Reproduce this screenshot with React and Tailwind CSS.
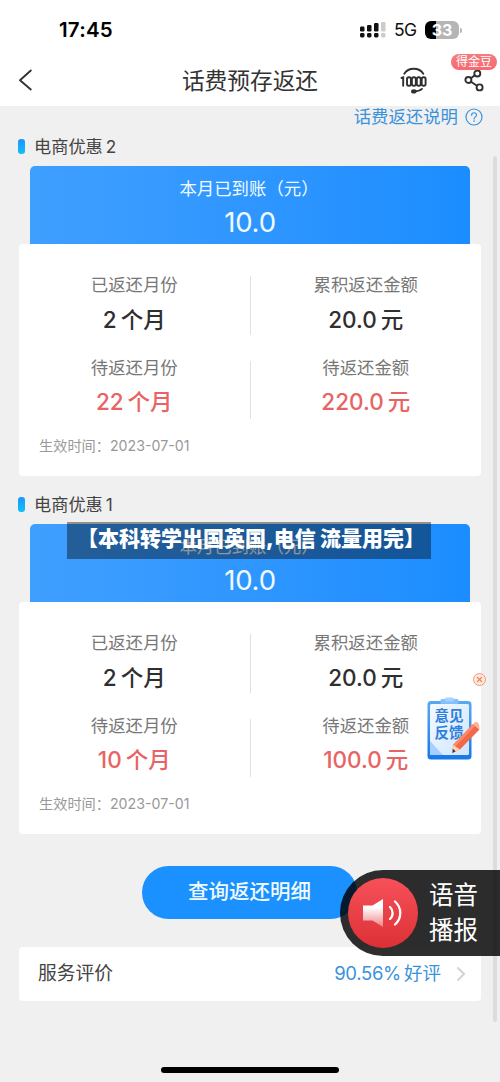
import React from 'react';

const plans = [
  { id: 2, monthAmount: '10.0', months: '2', total: '20.0', monthsLeft: '22', amountLeft: '220.0', date: '2023-07-01' },
  { id: 1, monthAmount: '10.0', months: '2', total: '20.0', monthsLeft: '10', amountLeft: '100.0', date: '2023-07-01' },
];

function StatusBar() {
  return (
    <div className="h-[54px] flex items-center justify-between pl-[59px] pr-[38px] pt-[6px]">
      <span className="text-[20.5px] leading-6 font-semibold text-black tracking-[0.2px]">17:45</span>
      <div className="flex items-center">
        <svg width="26" height="16" viewBox="0 0 26 16">
          <g fill="#111">
            <rect x="0" y="4.5" width="4.5" height="5" rx="1.2" />
            <rect x="7" y="3" width="4.5" height="6.5" rx="1.2" />
            <rect x="14" y="1" width="4.5" height="8.5" rx="1.2" />
            <rect x="0" y="11" width="4.5" height="4.5" rx="1.4" />
            <rect x="7" y="11" width="4.5" height="4.5" rx="1.4" />
            <rect x="14" y="11" width="4.5" height="4.5" rx="1.4" />
          </g>
          <g fill="#ccc">
            <rect x="21" y="0" width="4.5" height="9.5" rx="1.2" />
            <rect x="21" y="11" width="4.5" height="4.5" rx="1.4" />
          </g>
        </svg>
        <span className="ml-[8px] w-[23px] text-[17.5px] leading-5 text-[#111] tracking-[-0.6px]">5G</span>
        <div className="ml-[8px] w-[34px] h-[18px] rounded-[6px] flex items-center justify-center bg-linear-to-r from-black from-33% to-[#b5b5b5] to-33% text-white text-[16px] leading-none font-bold">
          33
        </div>
        <div className="ml-px w-[2px] h-[5px] rounded-r-full bg-[#b5b5b5]" />
      </div>
    </div>
  );
}

function ServiceIcon() {
  return (
    <svg width="28" height="28" viewBox="0 0 28 28" fill="none" stroke="#2f2f2f" strokeWidth="1.9" strokeLinecap="round">
      <path d="M4.300 6.800C6.300 3.600 9.800 1.800 13.800 1.800S21.300 3.600 23.300 6.800" />
      <path d="M1.500 11l1.700-.7v8.400" />
      <rect x="7" y="10.300" width="3.900" height="8.400" rx="1.800" />
      <rect x="11.900" y="10.300" width="3.900" height="8.400" rx="1.800" />
      <rect x="16.800" y="10.300" width="3.900" height="8.400" rx="1.800" />
      <rect x="21.700" y="10.300" width="3.900" height="8.400" rx="1.800" />
      <path d="M14 24.500c4-.1 6.100-.9 8-2.600" />
      <ellipse cx="13.800" cy="24.400" rx="1.800" ry="1.100" fill="#2f2f2f" />
    </svg>
  );
}

function NavBar() {
  return (
    <div className="relative h-[52px] flex items-center justify-center">
      <svg className="absolute left-[18px] top-[15px]" width="15" height="22" viewBox="0 0 15 22" fill="none" stroke="#333" strokeWidth="1.9" strokeLinecap="round" strokeLinejoin="round">
        <path d="M12.800 1.500L2 11.200l10.800 9.300" />
      </svg>
      <h1 className="pt-px text-[22.7px] leading-8 text-[#333]">话费预存返还</h1>
      <div className="absolute left-[400px] top-[13px]">
        <ServiceIcon />
      </div>
      <svg className="absolute left-[464px] top-[15px]" width="21" height="23" viewBox="0 0 21 23" fill="none" stroke="#2f2f2f" strokeWidth="1.9">
        <circle cx="4.4" cy="11" r="3" />
        <circle cx="13.3" cy="4.5" r="3" />
        <circle cx="15.6" cy="18.400" r="3" />
        <path d="M6.900 9.200l3.900-2.900M6.900 12.800l6.100 4" />
      </svg>
      <span className="absolute left-[451px] top-0 w-[46px] h-[16px] rounded-full bg-linear-to-b from-[#f47c7c] to-[#f96872] text-white text-[12px] leading-[16px] text-center whitespace-nowrap">
        得金豆
      </span>
    </div>
  );
}

function Stat({ label, value, unit, highlight }) {
  return (
    <div className="flex-1 flex flex-col items-center">
      <span className="text-[17.4px] leading-6 text-[#777]">{label}</span>
      <span className={`flex items-center gap-[4px] text-[22.5px] leading-8 font-medium ${highlight ? 'mt-[6px] text-[#e86464]' : 'mt-[7px] text-[#2f2f2f]'}`}>
        <span>{value}</span>
        <span>{unit}</span>
      </span>
    </div>
  );
}

function PlanCard({ plan }) {
  return (
    <section className="h-[338px] mb-[20px]">
      <div className="h-[28px] pl-[18px] flex items-start">
        <span className="mt-[1px] w-[7px] h-[15px] rounded-[3px] bg-linear-to-b from-[#1f93ff] to-[#12c0f5]" />
        <h2 className="-mt-[3px] ml-[9px] text-[17.2px] leading-6 text-[#444] flex gap-[3px]">
          <span>电商优惠</span>
          <span>{plan.id}</span>
        </h2>
      </div>
      <div className="ml-[30px] w-[440px] h-[78px] rounded-t-[5px] bg-linear-to-r from-[#3f9fff] to-[#1b8dff] text-[#f0fbff] flex flex-col items-center">
        <span className="mt-[11px] pr-[2px] text-[17.4px] leading-6">本月已到账（元）</span>
        <span className="mt-[4px] text-[27.5px] leading-[34px] tracking-[-0.2px]">{plan.monthAmount}</span>
      </div>
      <div className="ml-[19px] w-[462px] h-[232px] rounded-[4px] bg-white">
        <div className="pt-[29px] flex">
          <Stat label="已返还月份" value={plan.months} unit="个月" />
          <div className="mt-[3px] w-px h-[59px] bg-[#e0e0e0]" />
          <Stat label="累积返还金额" value={plan.total} unit="元" />
        </div>
        <div className="mt-[20px] flex">
          <Stat label="待返还月份" value={plan.monthsLeft} unit="个月" highlight />
          <div className="mt-[5px] w-px h-[58px] bg-[#e0e0e0]" />
          <Stat label="待返还金额" value={plan.amountLeft} unit="元" highlight />
        </div>
        <div className="mt-[17px] pl-[20px] flex text-[14.2px] leading-5 text-[#999]">
          <span>生效时间：</span>
          <span>{plan.date}</span>
        </div>
      </div>
    </section>
  );
}

function FeedbackBadge() {
  return (
    <div className="absolute left-[425px] top-[671px] w-[64px] h-[94px]">
      <svg width="64" height="94" viewBox="0 0 64 94">
        <defs>
          <linearGradient id="board" x1="0" y1="0" x2="0" y2="1">
            <stop offset="0" stopColor="#5aa8f5" />
            <stop offset="1" stopColor="#1677e8" />
          </linearGradient>
          <linearGradient id="paper" x1="0" y1="0" x2="1" y2="1">
            <stop offset="0" stopColor="#f4faff" />
            <stop offset="1" stopColor="#cfe6ff" />
          </linearGradient>
        </defs>
        <circle cx="54.5" cy="8.5" r="6" fill="#ffe8dc" stroke="#ef9a7d" strokeWidth="1" />
        <path d="M52 6l5 5M57 6l-5 5" stroke="#ea8868" strokeWidth="1.2" />
        <rect x="2.5" y="30" width="44" height="58.5" rx="3.5" fill="url(#board)" />
        <rect x="5" y="33" width="39" height="51" rx="1.5" fill="url(#paper)" />
        <path d="M5 70l13 14H5z" fill="#a5cffc" />
        <rect x="15.5" y="28" width="18" height="5" rx="1.5" fill="#83c0fb" />
        <rect x="20" y="26.500" width="9" height="4" rx="1.5" fill="#a5d3ff" />
      </svg>
      <div className="absolute left-[4px] top-[36px] w-[40px] text-center text-[14.5px] leading-[17px] font-bold text-[#2f7fdc]">
        意见
        <br />
        反馈
      </div>
      <svg className="absolute left-0 top-0" width="64" height="94" viewBox="0 0 64 94">
        <path d="M28 74l20-21 6.500 5.500L35 78.500l-7.500 3.500z" fill="#f2694a" />
        <path d="M28 74l20-21 2.200 1.800L30 76z" fill="#ff8a68" />
        <path d="M48 53l1.500-1.500c2-1.600 5.200.8 4.700 4.200L54.500 58.500z" fill="#ffb196" />
        <path d="M28 74l7 4.500-7.500 3.500z" fill="#ffd0b0" />
        <path d="M27.800 77.800l2.800 2.500-3.100 1.700z" fill="#333" />
      </svg>
    </div>
  );
}

function VoiceButton() {
  return (
    <button className="absolute left-[340px] top-[870px] w-[160px] h-[86px] rounded-l-[43px] bg-black/82 flex items-center pl-[8px]">
      <span className="w-[70px] h-[70px] rounded-full bg-linear-to-b from-[#f75059] to-[#dc3036] flex items-center justify-center">
        <svg width="42" height="32" viewBox="0 0 42 32" fill="none">
          <defs>
            <linearGradient id="horn" x1="0" y1="0" x2="0" y2="1">
              <stop offset="0.3" stopColor="#fff" />
              <stop offset="1" stopColor="#fff" stopOpacity="0.35" />
            </linearGradient>
          </defs>
          <path d="M1 8.500h9.500L21 2v28l-10.500-6.500H1z" fill="url(#horn)" />
          <path d="M28 10c3.500 3.200 3.500 9 0 12M33 4.500c7 6 7 17 0 23" stroke="#fff" strokeWidth="2.3" strokeLinecap="round" />
        </svg>
      </span>
      <span className="ml-[11px] text-[24.5px] leading-[35px] text-white">
        语音
        <br />
        播报
      </span>
    </button>
  );
}

export default function App() {
  return (
    <div
      lang="zh-CN"
      className="relative w-[500px] h-[1082px] overflow-hidden bg-[#f0f0f0] font-['Inter','Noto_Sans_CJK_SC',sans-serif]"
    >
      <header className="h-[106px] bg-white">
        <StatusBar />
        <NavBar />
      </header>

      <main>
        <div className="h-[33px] pr-[17px] flex items-start justify-end text-[#3b92db]">
          <span className="-mt-[1px] text-[17.4px] leading-6">话费返还说明</span>
          <svg className="ml-[7px] mt-[2px]" width="18" height="18" viewBox="0 0 18 18" fill="none" stroke="currentColor" strokeWidth="1.2" strokeLinecap="round">
            <circle cx="9" cy="9" r="8" />
            <path d="M6.600 7.200c0-3.200 4.900-3.200 4.900-.2 0 1.900-2.400 1.900-2.400 3.900" />
            <path d="M9.100 13v.2" strokeWidth="1.5" />
          </svg>
        </div>

        <div className="-mt-[1px]">
          {plans.map((plan) => (
            <PlanCard key={plan.id} plan={plan} />
          ))}
        </div>

        <button className="mt-[32px] ml-[142px] block w-[215px] h-[53px] rounded-full bg-[#1b90ff] text-[20.5px] font-medium text-[#f0fbff]">
          查询返还明细
        </button>

        <div className="mt-[28px] ml-[19px] w-[462px] h-[54px] rounded-[4px] bg-white pl-[19px] pr-[15px] flex items-center justify-between">
          <span className="text-[18.8px] text-[#444]">服务评价</span>
          <div className="flex items-center text-[18.5px] text-[#3b92db]">
            <span className="tracking-[-0.3px]">90.56%</span>
            <span className="ml-[3px]">好评</span>
            <svg className="ml-[15px]" width="10" height="16" viewBox="0 0 10 16" fill="none" stroke="#d5d5d5" strokeWidth="2.2">
              <path d="M1.500 1.500L8 8l-6.500 6.500" />
            </svg>
          </div>
        </div>
      </main>

      {/* scroll track */}
      <div className="absolute left-[493px] top-[156px] w-[4px] h-[866px] rounded-full bg-[#dcdcdc]" />

      <div className="absolute left-[67px] top-[522px] w-[364px] h-[37px] pl-[4px] bg-black/40 text-white text-[21px] leading-[34px] font-black text-center whitespace-nowrap">
        【本科转学出国英国,电信 流量用完】
      </div>

      <FeedbackBadge />
      <VoiceButton />

      {/* home indicator */}
      <div className="absolute left-[161px] top-[1067px] w-[178px] h-[6px] rounded-full bg-black" />
    </div>
  );
}
